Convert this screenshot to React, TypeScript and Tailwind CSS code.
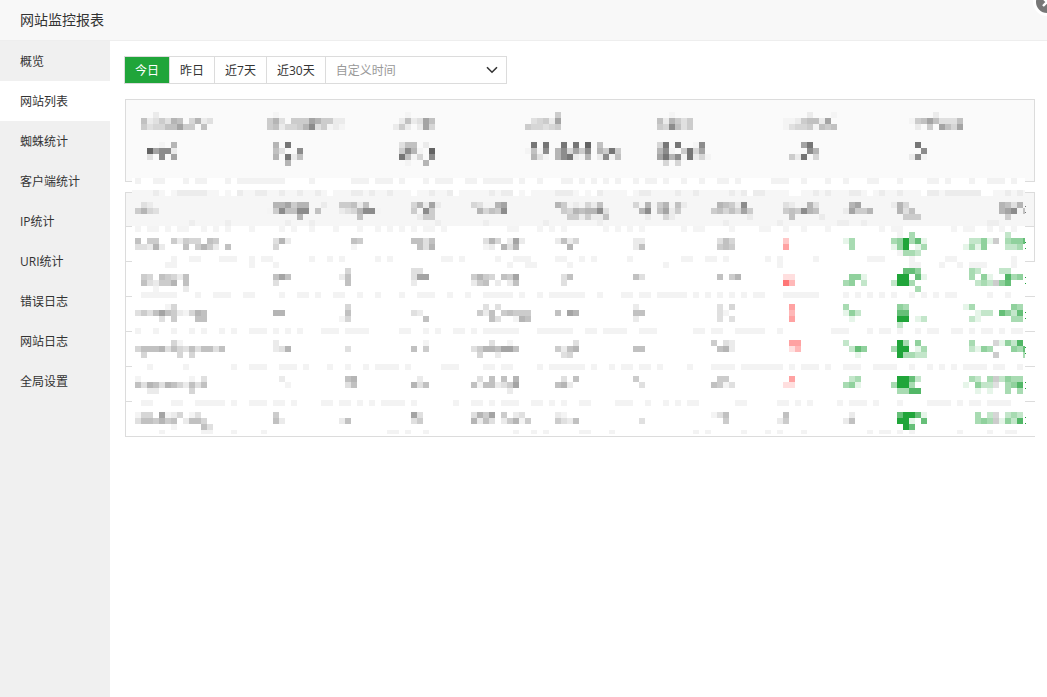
import React, { useState } from "react";

type Run = [number, number?];

type Strip = {
    y: number;
    height?: number;
    base?: string;
    color: string;
    runs: Run[];
    gaps?: Run[];
};

// side of one block of the masked values
const BLOCK = 6;

const PALETTE: Record<string, string> = {
    "1": "#f4f4f4",
    "2": "#ebebeb",
    "3": "#e0e0e0",
    "4": "#d6d6d6",
    "5": "#cccccc",
    "6": "#c1c1c1",
    "7": "#b5b5b5",
    "8": "#a4a4a4",
    "9": "#8c8c8c",
    A: "#767676",
    B: "#636363",
    a: "#e6f5e9",
    b: "#c3e6ca",
    c: "#a8dbb2",
    d: "#90d19d",
    e: "#66bf78",
    f: "#52b767",
    g: "#20a53a",
    p: "#ffdfdf",
    q: "#ffc8c8",
    r: "#ffb8b8",
    s: "#ffa2a2",
    t: "#ff7777",
};

const menu = ["概览", "网站列表", "蜘蛛统计", "客户端统计", "IP统计", "URI统计", "错误日志", "网站日志", "全局设置"];

const ranges = ["今日", "昨日", "近7天", "近30天"];

const summary = [
    { label: "   2/ 6235376 4723/ 534466855 6", value: "    1 7/  B8992/  3 9 8" },
    { label: "  1/ 573 555875522/ 5624457935121", value: "  7 A/  63  9/  7 A26/    7" },
    { label: "  1/ 262386/252 284", value: " 366 2/ 5971 B/ A614 9/  1  7" },
    { label: "      5/  34528/ 544345", value: "  A A  A A B 6/ 1619 794859 75A5/  731 79A217 2916" },
    { label: "   1/ 627535/ 549635", value: " 4A A  19/ 791 5A48/ 8A791A241/  4 4" },
    { label: "     2   1/ 11256628/ 134451656", value: "    8A/     97/  52A 4" },
    { label: "    2/156863336/ 2 5 8648", value: " A/  9/291" },
];

const head = [
    "  32/ 5743",
    " 778577  2/1596699 6/     7",
    " 55626/ 2347991/    6",
    " 47282/ 5 95/  255",
    " 431178/  74659",
    " 75121426/  54767793/   5525226",
    " 417157162/  79 6825/   2  42",
    "  76529/ 5646485/       2",
    " 32 173/ 565976/  6    2",
    "  78/ 28557",
    " 274/  736/   555",
    "       7637/       78916/        5",
];

const rows = [
    [
        "/ 6 55  52544 65/ 33272   6 5752 6",
        "/ 372/ 4",
        "/   65/   1",
        "/ 6636/  637",
        "/   374 282/   12 737",
        "/ 2624/   7",
        "/ 22/ 26",
        "/  364/  565",
        "/ q/ s",
        "/ ac/  c",
        "  1 c/ cdgcea/ adg ac/  1ccb",
        "        b/  bbda5 cdde/ acad   bbc",
    ],
    [
        "/  54 65426/  632557 6/    1    2",
        "/ 686/ 3",
        "  4/ 26/  6",
        " 33/ 388/ 2",
        "/ 5754 658/ 256 2 26",
        "/  36/  3",
        "/ 63",
        "/  6 57",
        "/ pp/ tr",
        "/  dda/ cd b",
        "   eed/  gg ea/ bggc/     c",
        "  cb   bb/  c da  fcd/   bcb5de",
    ],
    [
        "      14/ 353686521476/     3 5   66",
        "/ 77",
        "  4/  6/ 14",
        "/ 32/   6",
        "   3 3/  526 56555/    63  176",
        "/ 6 87",
        " 2/ 66/ 2",
        "  3 4/  31/  3 3",
        "  s/  r/  s",
        " c/ adb/  a",
        "  dc/  ee/  gg ab/  b",
        " ac      dc/   abb edbe/  ba     cc",
    ],
    [
        "       41/ 466673643636636/  4     4 4",
        " 2/ 237",
        "/  3",
        "   1/ 6 5",
        "    3  1/ 35776886/  4  2",
        "    3/ 5267/  34",
        "/ 66",
        " 5 32/  672",
        "  ss/  pr",
        " b/  bed/   a",
        "  gc d/ cgg ac/  gccbb",
        "  c   4adbf/  badc   dce/      5    c",
    ],
    [
        " 1        1 3/ 637637642636/   22     4",
        "  2/   1",
        "  67/  36",
        "  2/ 736",
        "  3 6 6 7/ 61662358/       2",
        "  3 6/ 672",
        " 5/  3",
        "  55/ 6513",
        "  s/ pp",
        "  bc/ cda",
        "  ggeb/ cggc/  ccff",
        "  cb c5bdcc/ a dbb3 cdf/   a a  c c",
    ],
    [
        " 144 8124 13/ 3665756 2664/       1    63",
        " 5/ 62",
        "/ 26",
        " 83/ 35",
        " 3758 5 23/ 7263 25715",
        " 21/ 5326",
        "/  3",
        " 136/   5",
        " 6/25",
        "  2/ 26",
        "  eggea/  gga e/   ge",
        "   c b4 bcb/   cdc5adbf",
    ],
];

// y counts from the top edge of the box each strip belongs to
const summaryStrip: Strip = {
    y: 0,
    base: "#ffffff",
    color: "#f2f2f2",
    runs: [
        [1], [4, 2], [9], [11, 2], [16], [18, 8], [30], [37, 3], [41, 3], [45], [49], [51, 3], [56, 2], [59, 5], [65],
        [68], [72, 2], [75], [77], [79], [81], [84], [86, 2], [89], [92], [95], [98, 2], [101], [107, 3], [112], [116],
        [119], [123, 2], [128], [133, 2], [136], [140], [143, 3], [147],
    ],
};

const tableStrips: Strip[] = [
    {
        y: 0,
        base: "#f6f6f6",
        color: "#ececec",
        runs: [
            [4], [8, 5], [18], [21, 2], [25], [28], [31], [37, 2], [40], [43], [50], [53], [60], [62, 2], [71, 3], [78],
            [85, 2], [91], [94], [100], [102], [104, 2], [114], [116], [120, 2], [125], [128], [133, 2], [136, 6], [146], [148],
        ],
        gaps: [[6], [15], [17], [33], [47], [54], [64], [66], [75], [77], [83], [103], [110, 2], [123], [132], [142, 2]],
    },
    { y: 30, color: "#eeeeee", runs: [[10], [16], [26], [30], [51], [59], [69], [78], [99], [108], [118, 2], [122], [143, 2]] },
    {
        y: 36,
        base: "#ffffff",
        color: "#f4f4f4",
        runs: [
            [1], [3, 2], [6], [8, 2], [12], [14], [16], [20], [25], [27], [30], [34], [38], [41], [43], [45], [47], [49, 2],
            [52], [63, 2], [68], [70], [72], [79], [81], [83], [85], [92], [94, 2], [100], [105, 2], [109], [112], [116],
            [125], [127, 2], [137], [139, 2], [143], [145], [147],
        ],
    },
    {
        y: 66,
        base: "#ffffff",
        color: "#f3f3f3",
        runs: [
            [7], [10, 2], [15, 3], [20], [22, 2], [30], [33], [35], [41], [43], [52, 2], [55], [61], [64, 3], [71, 2], [75],
            [77], [83], [92, 2], [96, 2], [99], [106], [108], [114], [123, 3], [130], [136, 2], [147],
        ],
    },
    {
        y: 72,
        base: "#ffffff",
        color: "#f3f3f3",
        runs: [[6, 2], [20], [24], [63], [66, 2], [73], [89], [108], [130, 2], [135], [138], [140, 3], [147]],
    },
    {
        y: 102,
        base: "#ffffff",
        color: "#f3f3f3",
        runs: [
            [2, 6], [11], [14, 3], [19, 2], [25], [28, 2], [31], [34, 2], [38], [41], [45], [48, 3], [53], [56], [59, 5],
            [65], [68], [70, 6], [78], [82, 2], [85, 2], [88, 5], [94], [96], [98], [100], [102], [104, 2], [109, 6], [119],
            [121], [123], [125], [127], [130], [132], [134], [136, 2], [143], [146],
        ],
    },
    {
        y: 138,
        base: "#ffffff",
        color: "#f3f3f3",
        runs: [
            [1], [4], [7], [10], [12], [15], [17], [20, 3], [24], [26], [28], [32, 3], [36, 4], [45, 2], [49], [51], [54, 2],
            [57], [59, 6], [68, 6], [76, 2], [79, 4], [85, 3], [94, 2], [97, 2], [101, 5], [108], [117, 3], [123], [125, 2],
            [128], [131], [133, 2], [137, 2], [140], [142, 2], [145], [147, 2],
        ],
    },
    {
        y: 174,
        base: "#ffffff",
        color: "#f3f3f3",
        runs: [
            [3], [9], [17], [20, 3], [25, 3], [29], [33], [36], [39], [41, 4], [46], [52, 3], [59, 2], [62, 2], [68],
            [70, 6], [77], [80], [82, 2], [85, 2], [88], [93], [97, 4], [102, 7], [110], [112, 3], [116], [119, 3],
            [124, 4], [130], [133], [135], [137], [139, 4], [144, 2], [148],
        ],
    },
    {
        y: 210,
        base: "#ffffff",
        color: "#f3f3f3",
        runs: [
            [2, 2], [7, 2], [11, 5], [17], [20, 3], [24, 2], [27], [32, 2], [35, 2], [38], [40], [42, 4], [47], [54],
            [57, 2], [60], [62, 3], [67, 2], [70], [72], [75, 2], [81, 3], [86], [89], [91], [93, 2], [101, 2], [108, 2],
            [111], [113], [118], [120, 3], [124], [128], [133, 4], [138], [140, 2], [143, 4],
        ],
    },
    {
        y: 240,
        height: 4,
        color: "#f3f3f3",
        runs: [
            [5], [12, 2], [17], [22], [43, 2], [46], [49], [64], [67], [69], [75, 2], [80], [94], [96], [102], [106],
            [108], [112], [123], [125, 2], [128], [130], [138], [143], [146, 2],
        ],
    },
];

type MosaicProps = { data: string; top?: number; height: number; limit?: number; dots?: string };

function Mosaic({ data, top = 0, height, limit = Infinity, dots }: MosaicProps) {
    return (
        <svg className="block w-full overflow-visible" height={height} shapeRendering="crispEdges" aria-hidden="true">
            {data.split("/").map((line, r) =>
                line.split("").map((c, i) =>
                    c === " " ? null : (
                        <rect
                            key={`${r}-${i}`}
                            x={i * BLOCK}
                            y={top + r * BLOCK}
                            width={Math.min(BLOCK, limit - i * BLOCK)}
                            height={BLOCK}
                            fill={PALETTE[c]}
                        />
                    )
                )
            )}
            {dots && (
                <>
                    <rect x={68} y={height > 33 ? 15 : 13} width={1} height={1} fill={dots} />
                    <rect x={68} y={height > 33 ? 21 : 19} width={1} height={1} fill={dots} />
                </>
            )}
        </svg>
    );
}

function Strips({ strips, className }: { strips: Strip[]; className: string }) {
    return (
        <svg className={`pointer-events-none absolute ${className}`} shapeRendering="crispEdges" aria-hidden="true">
            {strips.map((s) => (
                <g key={s.y}>
                    {s.base && <rect x={3} y={s.y} width={893} height={BLOCK} fill={s.base} />}
                    {s.gaps?.map(([k, n = 1]) => (
                        <rect key={`g${k}`} x={k * BLOCK} y={s.y} width={n * BLOCK} height={BLOCK} fill="#ffffff" />
                    ))}
                    {s.runs.map(([k, n = 1]) => (
                        <rect key={k} x={k * BLOCK} y={s.y} width={n * BLOCK} height={s.height ?? BLOCK} fill={s.color} />
                    ))}
                </g>
            ))}
        </svg>
    );
}

export default function App() {
    const [page, setPage] = useState("网站列表");
    const [range, setRange] = useState("今日");

    return (
        <div className="relative flex min-h-screen flex-col overflow-hidden bg-white font-['Open_Sans','Noto_Sans_CJK_SC',sans-serif] text-xs text-[#333]">
            <header className="flex h-[41px] items-center border-b border-[#eee] bg-[#f8f8f8] px-5">
                <h1 className="text-sm">网站监控报表</h1>
            </header>
            <button aria-label="关闭" className="absolute -top-3 -right-[14px] size-7 rounded-full border-3 border-white bg-[#777]">
                <svg viewBox="0 0 22 22" className="block size-full" fill="none" stroke="#fff" strokeWidth="2.4">
                    <path d="M7 7l8 8M15 7l-8 8" />
                </svg>
            </button>

            <div className="flex flex-1">
                <nav className="w-[110px] shrink-0 bg-[#f0f0f0]">
                    {menu.map((item) => (
                        <button
                            key={item}
                            onClick={() => setPage(item)}
                            className={`block h-10 w-full pt-0.5 pl-5 text-left ${item === page ? "bg-white" : ""}`}
                        >
                            {item}
                        </button>
                    ))}
                </nav>

                <main className="min-w-0 flex-1 pt-[15px] pr-3 pl-[14px]">
                    <div className="flex">
                        <div className="flex h-7 border border-[#dcdcdc]">
                            {ranges.map((item) => (
                                <button
                                    key={item}
                                    onClick={() => setRange(item)}
                                    className={`border-r border-[#dcdcdc] px-[10px] pt-0.5 ${item === range ? "bg-[#20a53a] text-white" : ""}`}
                                >
                                    {item}
                                </button>
                            ))}
                            <div className="relative w-[180px]">
                                <select
                                    aria-label="自定义时间"
                                    className="size-full appearance-none bg-white pt-0.5 pl-[10px] text-[#999]"
                                >
                                    <option>自定义时间</option>
                                </select>
                                <svg
                                    viewBox="0 0 12 8"
                                    className="pointer-events-none absolute top-[9px] right-2 h-2 w-3"
                                    fill="none"
                                    stroke="#333"
                                    strokeWidth="1.6"
                                >
                                    <path d="M1 1.2l5 5 5-5" />
                                </svg>
                            </div>
                        </div>
                    </div>

                    <section className="relative mt-[15px] ml-px border border-[#dcdcdc] bg-[#fafafa]">
                        <div className="grid grid-cols-[126fr_132fr_126fr_132fr_126fr_132fr_125fr] pt-3 pb-[15px] pl-[9px]">
                            {summary.map((s, i) => (
                                <div key={i} className="flex flex-col gap-3">
                                    <Mosaic data={s.label} height={18} />
                                    <Mosaic data={s.value} height={24} />
                                </div>
                            ))}
                        </div>
                        <Strips strips={[summaryStrip]} className="-bottom-[3px] left-[3px] h-[6px] w-[896px]" />
                    </section>

                    <section className="relative mt-[10px] ml-px border-y border-l border-[#dcdcdc]">
                        <table className="w-full table-fixed border-separate border-spacing-0">
                            <colgroup>
                                <col />
                                <col className="w-[66px]" />
                                <col className="w-[72px]" />
                                <col className="w-[60px]" />
                                <col className="w-[84px]" />
                                <col className="w-[78px]" />
                                <col className="w-[78px]" />
                                <col className="w-[72px]" />
                                <col className="w-[60px]" />
                                <col className="w-[48px]" />
                                <col className="w-[72px]" />
                                <col className="w-[78px]" />
                            </colgroup>
                            <thead>
                                <tr className="bg-[#f6f6f6]">
                                    {head.map((data, i) => (
                                        <th key={i} className="border-[#dcdcdc] p-0 first:pl-[3px] last:border-r">
                                            <Mosaic
                                                data={data}
                                                top={9}
                                                height={33}
                                                limit={i === 11 ? 68 : undefined}
                                                dots={i === 11 ? "#777777" : undefined}
                                            />
                                        </th>
                                    ))}
                                </tr>
                            </thead>
                            <tbody>
                                {rows.map((cells, r) => (
                                    <tr key={r} className="first:*:last:border-r">
                                        {cells.map((data, i) => (
                                            <td key={i} className="border-t border-[#dcdcdc] p-0 first:pl-[3px]">
                                                <Mosaic
                                                    data={data}
                                                    top={5 + r}
                                                    height={34}
                                                    limit={i === 11 ? 68 : undefined}
                                                    dots={i === 11 ? "#20a53a" : undefined}
                                                />
                                            </td>
                                        ))}
                                    </tr>
                                ))}
                            </tbody>
                        </table>
                        <Strips strips={tableStrips} className="-top-[3px] left-[3px] h-[244px] w-[896px]" />
                    </section>
                </main>
            </div>
        </div>
    );
}
